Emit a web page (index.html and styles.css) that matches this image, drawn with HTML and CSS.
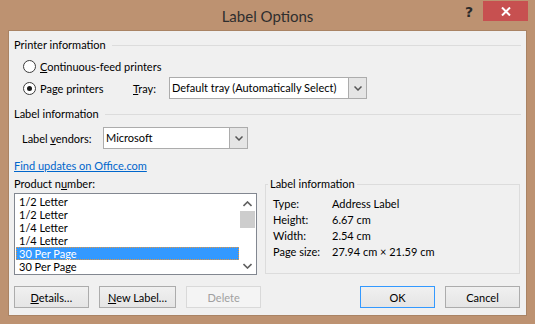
FILE: index.html
```html
<!DOCTYPE html>
<html lang="en">
<head>
  <meta charset="UTF-8" />
  <title>Label Options</title>
  <link rel="stylesheet" href="styles.css">
</head>
<body>
  <div class="window">
    <div class="titlebar">
      <span></span>
      <span class="title">Label Options</span>
      <div class="controls">
        <span class="help">?</span>
        <span class="close">
          <svg width="10" height="9" viewBox="0 0 10 9"><path d="M1 0.5 L9 8.5 M9 0.5 L1 8.5" stroke="#fff" stroke-width="2"/></svg>
        </span>
      </div>
    </div>

    <div class="client">
      <div class="group-head">Printer information</div>
      <div class="option">
        <span class="radio"></span>
        <span><u>C</u>ontinuous-feed printers</span>
      </div>
      <div class="option tall">
        <span class="radio checked"></span>
        <span class="option-text">Pa<u>g</u>e printers</span>
        <span class="tray-label"><u>T</u>ray:</span>
        <div class="combo tray">
          <span class="combo-value">Default tray (Automatically Select)</span>
          <span class="combo-btn">
            <svg width="8" height="5" viewBox="0 0 8 5"><path d="M0.5 0.5 L4 4 L7.5 0.5" fill="none" stroke="#555" stroke-width="1.5"/></svg>
          </span>
        </div>
      </div>

      <div class="group-head second">Label information</div>
      <div class="vendor-row">
        <span class="vendor-label">Label <u>v</u>endors:</span>
        <div class="combo vendor">
          <span class="combo-value">Microsoft</span>
          <span class="combo-btn">
            <svg width="8" height="5" viewBox="0 0 8 5"><path d="M0.5 0.5 L4 4 L7.5 0.5" fill="none" stroke="#555" stroke-width="1.5"/></svg>
          </span>
        </div>
      </div>

      <a class="link" href="#">Find updates on Office.com</a>

      <div class="lower">
        <div class="product">
          <div class="product-label">Product n<u>u</u>mber:</div>
          <div class="listbox">
            <ul class="items">
              <li>1/2 Letter</li>
              <li>1/2 Letter</li>
              <li>1/4 Letter</li>
              <li>1/4 Letter</li>
              <li class="selected">30 Per Page</li>
              <li>30 Per Page</li>
            </ul>
            <div class="scrollbar">
              <svg width="9" height="6" viewBox="0 0 9 6"><path d="M0.5 5 L4.5 1 L8.5 5" fill="none" stroke="#606060" stroke-width="1.6"/></svg>
              <span class="thumb"></span>
              <span class="track"></span>
              <svg width="9" height="6" viewBox="0 0 9 6"><path d="M0.5 1 L4.5 5 L8.5 1" fill="none" stroke="#606060" stroke-width="1.6"/></svg>
            </div>
          </div>
        </div>

        <fieldset class="info">
          <legend>Label information</legend>
          <dl>
            <dt>Type:</dt><dd>Address Label</dd>
            <dt>Height:</dt><dd>6.67 cm</dd>
            <dt>Width:</dt><dd>2.54 cm</dd>
            <dt>Page size:</dt><dd>27.94 cm × 21.59 cm</dd>
          </dl>
        </fieldset>

        <div class="buttons">
          <button class="btn"><u>D</u>etails…</button>
          <button class="btn wide"><u>N</u>ew Label…</button>
          <button class="btn" disabled>Delete</button>
        </div>
        <div class="buttons right">
          <button class="btn default">OK</button>
          <button class="btn">Cancel</button>
        </div>
      </div>
    </div>
  </div>
</body>
</html>
```

FILE: styles.css
```css
* {
  box-sizing: border-box;
}

body {
  margin: 0;
  font-family: Lato, "Noto Sans", sans-serif;
  font-size: 11px;
  color: #000;
}

.window {
  width: 535px;
  height: 324px;
  background: #bd9271;
  padding: 0 8px 8px;
  display: flex;
  flex-direction: column;
}

.titlebar {
  height: 30px;
  margin: 0 -8px;
  display: grid;
  grid-template-columns: 1fr auto 1fr;
}

.title {
  font-size: 15px;
  line-height: 32px;
  color: #2e2e2e;
}

.controls {
  justify-self: end;
  display: flex;
  align-items: flex-start;
  margin-right: 7px;
}

.help {
  width: 28px;
  height: 22px;
  line-height: 24px;
  text-align: center;
  font-weight: bold;
  font-size: 14px;
  color: #2a2a2a;
  font-family: "DejaVu Sans", sans-serif;
}

.close {
  width: 45px;
  height: 20px;
  margin-top: 1px;
  background: #c75050;
  display: flex;
  align-items: center;
  justify-content: center;
}

.client {
  flex: 1;
  background: #f0f0f0;
  border: 1px solid #a98364;
  padding: 7px 6px 0 5px;
}

.group-head {
  display: flex;
  align-items: center;
  height: 14px;
  line-height: 14px;
}

.group-head::after {
  content: "";
  flex: 1;
  border-top: 1px solid #dcdcdc;
  margin: 0 -1px 0 6px;
}

.group-head.second {
  margin-top: 8px;
}

.option {
  display: flex;
  align-items: center;
  height: 14px;
  margin-top: 7px;
  padding-left: 9px;
}

.option.tall {
  height: 22px;
  margin-top: 4px;
}

.radio {
  width: 13px;
  height: 13px;
  border: 1px solid #3c3c3c;
  border-radius: 50%;
  background: #fff;
  margin-right: 4px;
  display: flex;
  align-items: center;
  justify-content: center;
}

.radio.checked::after {
  content: "";
  width: 5px;
  height: 5px;
  border-radius: 50%;
  background: #1a1a1a;
}

.option-text {
  width: 93px;
}

.tray-label {
  width: 36px;
}

.combo {
  display: flex;
  height: 22px;
  border: 1px solid #acacac;
  background: #fff;
}

.combo.tray {
  width: 198px;
}

.combo.vendor {
  width: 145px;
}

.combo-value {
  flex: 1;
  padding-left: 2px;
  line-height: 20px;
  white-space: nowrap;
  overflow: hidden;
}

.combo-btn {
  width: 18px;
  background: #e5e5e5;
  border-left: 1px solid #acacac;
  display: flex;
  align-items: center;
  justify-content: center;
}

.vendor-row {
  display: flex;
  align-items: center;
  margin-top: 6px;
  padding-left: 8px;
}

.vendor-label {
  width: 81px;
}

.link {
  display: block;
  width: max-content;
  height: 14px;
  line-height: 14px;
  margin-top: 10px;
  color: #0066cc;
}

.lower {
  margin-top: 4px;
  display: grid;
  grid-template-columns: 247px 1fr;
  column-gap: 4px;
  row-gap: 11px;
}

.product-label {
  height: 14px;
  line-height: 14px;
}

.listbox {
  width: 243px;
  height: 82px;
  margin-top: 2px;
  border: 1px solid #828790;
  background: #fff;
  display: flex;
}

.items {
  list-style: none;
  margin: 0;
  padding: 1px 0 0 1px;
  flex: 1;
}

.items li {
  height: 13px;
  line-height: 13px;
  padding-left: 3px;
}

.items li.selected {
  background: #3399ff;
  color: #fff;
  outline: 1px dotted #e8963c;
  outline-offset: -1px;
}

.scrollbar {
  width: 17px;
  display: flex;
  flex-direction: column;
  align-items: center;
  padding: 7px 0 5px;
}

.thumb {
  width: 15px;
  height: 17px;
  margin-top: 4px;
  background: #cdcdcd;
}

.track {
  flex: 1;
}

.info {
  margin: 0;
  padding: 5px 7px 0;
  height: 97px;
  border: 1px solid #dcdcdc;
  min-width: 0;
}

.info legend {
  padding: 0 2px;
  margin-left: -5px;
  line-height: 14px;
}

.info dl {
  margin: 0;
  display: grid;
  grid-template-columns: 59px 1fr;
}

.info dt, .info dd {
  margin: 0;
  height: 16px;
  line-height: 16px;
}

.buttons {
  display: flex;
  gap: 10px;
}

.buttons.right {
  justify-content: flex-end;
}

.btn {
  width: 75px;
  height: 22px;
  padding: 0;
  font: inherit;
  color: #000;
  border: 1px solid #acacac;
  background: linear-gradient(#f0f0f0, #e5e5e5);
}

.btn.wide {
  width: 78px;
}

.btn:disabled {
  color: #a0a0a0;
  border-color: #d9d9d9;
  background: #f4f4f4;
}

.btn.default {
  border-color: #3399ff;
}
```
